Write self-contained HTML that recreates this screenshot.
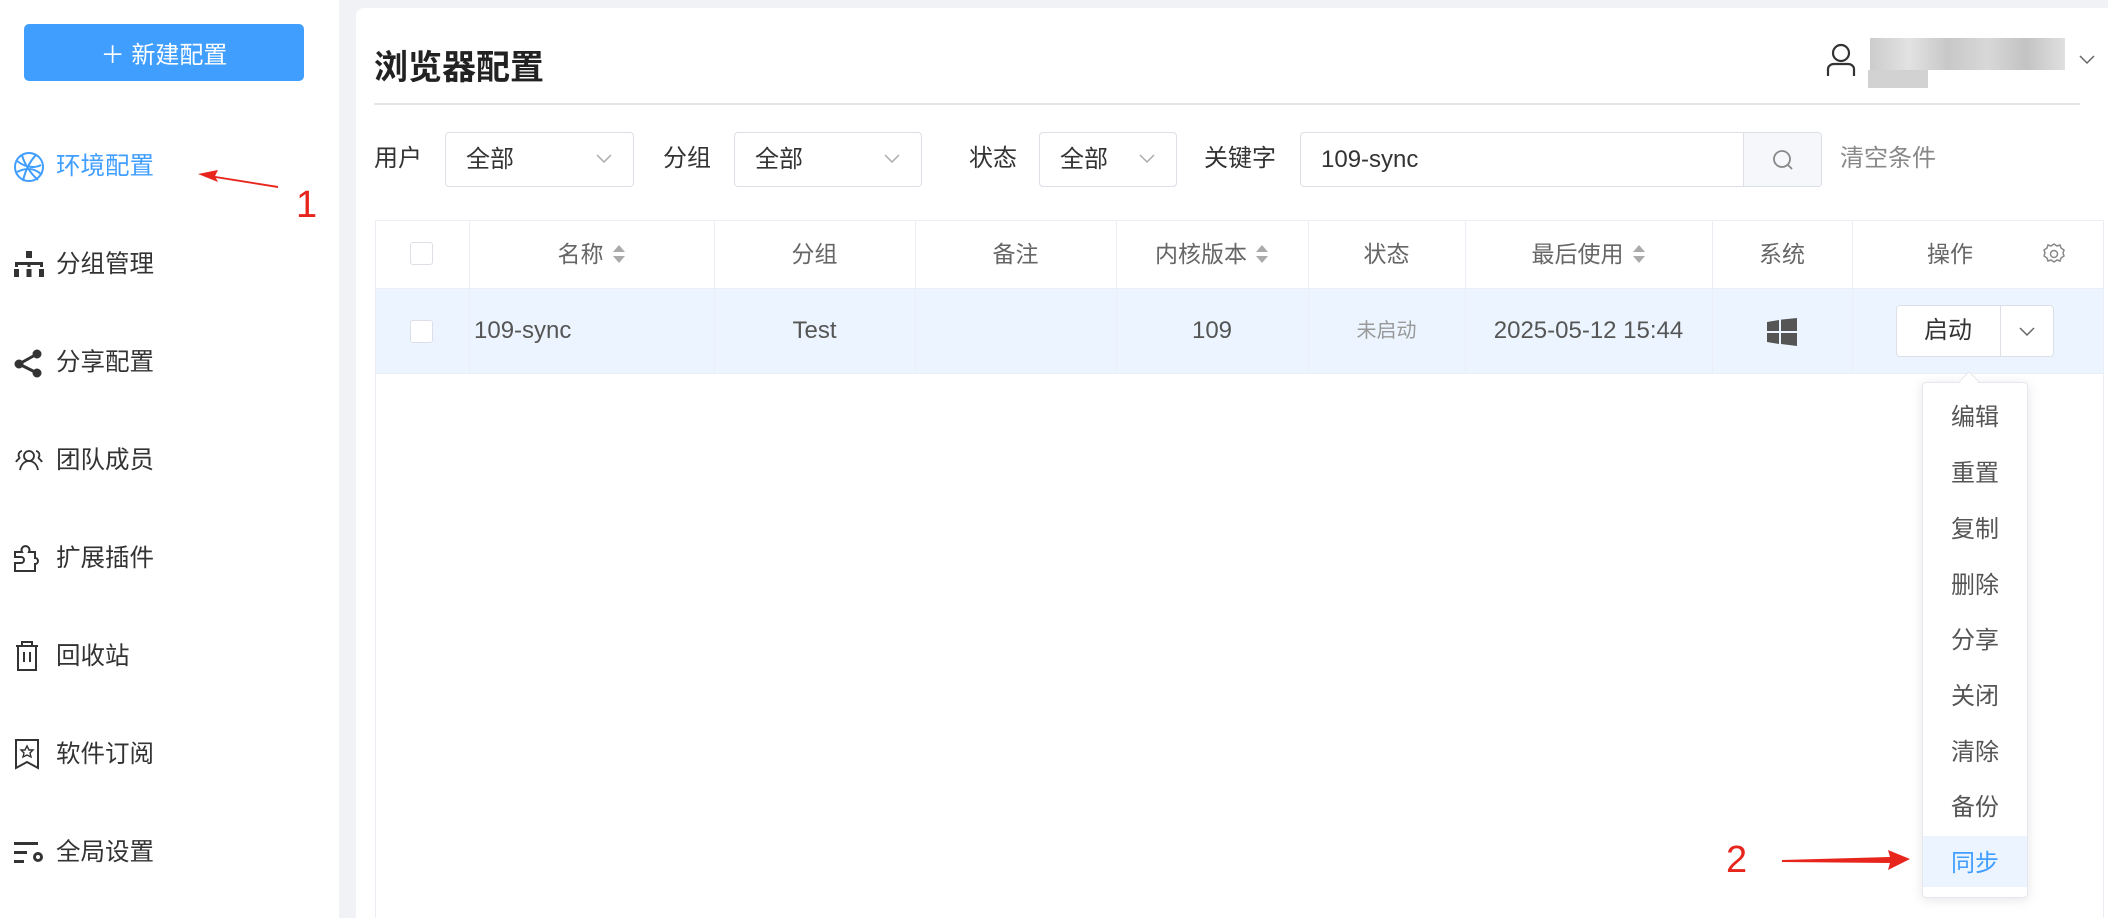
<!DOCTYPE html>
<html><head><meta charset="utf-8"><style>
*{margin:0;padding:0;box-sizing:border-box}
body{width:2108px;height:918px;overflow:hidden;background:#f0f2f5;font-family:"Liberation Sans","Noto Sans CJK SC",sans-serif;color:#333;position:relative}
.a{position:absolute}
.side{left:0;top:0;width:339px;height:918px;background:#fff}
.btn{left:24px;top:24px;width:280px;height:57px;background:#409eff;border-radius:5px;color:#fff;font-size:24px;display:flex;align-items:center;justify-content:center}
.mi{left:56px;font-size:24.5px;color:#333;line-height:30px}
.ic{left:13px}
.main{left:356px;top:8px;width:1752px;height:910px;background:#fff;border-radius:8px 0 0 0}
.lbl{font-size:24px;color:#333;top:144px;line-height:30px}
.sel{top:132px;height:55px;border:1px solid #dcdfe6;border-radius:4px;font-size:24px;color:#333;padding-left:20px;line-height:53px}
.sel svg{position:absolute;right:20px;top:20px}
.th{top:220px;height:68px;line-height:68px;font-size:23px;color:#666;text-align:center}
.td{top:288px;height:86px;line-height:86px;font-size:24px;color:#555;text-align:center}
.vl{top:220px;width:1px;height:154px;background:#ebeef5}
.cb{width:23px;height:23px;border:1px solid #dcdfe6;border-radius:3px;background:#fff}
.dd{font-size:24px;color:#555;width:106px;text-align:center;left:1922px;line-height:30px}
.sort{display:inline-block;vertical-align:middle;margin-left:8px;width:14px;height:20px;position:relative;top:-2px}
</style></head><body>
<div class="a side"></div>
<div class="a btn">＋&nbsp;新建配置</div>

<svg class="a ic" style="top:150px" width="32" height="34" viewBox="0 0 32 34" fill="none" stroke="#409eff" stroke-width="2"><circle cx="16" cy="17" r="14"/><path d="M4 11c8 6 16 8 24 4M4 22c8-4 16-5 24 2M9 5c2 8 8 18 16 25M23 5c-6 6-11 16-13 26"/></svg>
<div class="a mi" style="top:152px;color:#409eff">环境配置</div>
<svg class="a ic" style="top:250px" width="32" height="30" viewBox="0 0 32 30" fill="#333"><rect x="13" y="1" width="6" height="7"/><rect x="2" y="12" width="28" height="3"/><rect x="2" y="12" width="3" height="5"/><rect x="14.5" y="12" width="3" height="5"/><rect x="27" y="12" width="3" height="5"/><rect x="1" y="19" width="5" height="8"/><rect x="13.5" y="19" width="5" height="8"/><rect x="26" y="19" width="5" height="8"/></svg>
<div class="a mi" style="top:250px">分组管理</div>
<svg class="a ic" style="top:347px" width="32" height="32" viewBox="0 0 32 32" fill="#333" stroke="#333" stroke-width="3"><line x1="6" y1="17" x2="24" y2="7"/><line x1="6" y1="17" x2="24" y2="26"/><circle cx="6" cy="17" r="3"/><circle cx="24" cy="7" r="3"/><circle cx="24" cy="26" r="3"/></svg>
<div class="a mi" style="top:348px">分享配置</div>
<svg class="a ic" style="top:448px" width="32" height="24" viewBox="0 0 32 24" fill="none" stroke="#333" stroke-width="1.8"><circle cx="16" cy="8" r="5"/><path d="M7 22c1-6 5-9 9-9s8 3 9 9M9 3a4 4 0 0 0-2 7M3 14c1-2 2-3 4-4M23 3a4 4 0 0 1 2 7M29 14c-1-2-2-3-4-4"/></svg>
<div class="a mi" style="top:446px">团队成员</div>
<svg class="a ic" style="top:543px" width="30" height="30" viewBox="0 0 30 30" fill="none" stroke="#333" stroke-width="2"><path d="M2 14h6a3 3 0 1 1 0 6H2v8h20v-7a3 3 0 1 0 0-6V9h-6a4 4 0 1 0-7 0H2z"/></svg>
<div class="a mi" style="top:544px">扩展插件</div>
<svg class="a ic" style="top:640px" width="28" height="32" viewBox="0 0 28 32" fill="none" stroke="#333" stroke-width="2"><path d="M3 6h22M9 6V2h10v4M5 6v24h18V6M11 12v10M17 12v10"/></svg>
<div class="a mi" style="top:642px">回收站</div>
<svg class="a ic" style="top:738px" width="28" height="32" viewBox="0 0 28 32" fill="none" stroke="#333" stroke-width="2"><path d="M3 2h22v28l-11-6-11 6z"/><path d="M14 8l2 4h4l-3 3 1 4-4-2-4 2 1-4-3-3h4z" stroke-width="1.4"/></svg>
<div class="a mi" style="top:740px">软件订阅</div>
<svg class="a ic" style="top:840px" width="32" height="26" viewBox="0 0 32 26" fill="#333"><rect x="1" y="2" width="24" height="3"/><rect x="1" y="11" width="13" height="3"/><rect x="1" y="20" width="10" height="3"/><circle cx="25" cy="17" r="5"/><circle cx="25" cy="17" r="2" fill="#fff"/></svg>
<div class="a mi" style="top:838px">全局设置</div>

<svg class="a" style="left:190px;top:160px" width="100" height="40"><path d="M88 26 L25 16 L28 10 L8 14 L28 22 L26 18 L88 28z" fill="#e8251c"/></svg>
<div class="a" style="left:296px;top:184px;font-size:38px;color:#e8251c">1</div>

<div class="a main"></div>
<div class="a" style="left:374px;top:40px;font-size:34px;font-weight:bold;color:#222">浏览器配置</div>
<svg class="a" style="left:1826px;top:42px" width="30" height="36" viewBox="0 0 30 36" fill="none" stroke="#333" stroke-width="2.2"><circle cx="15" cy="11" r="8"/><path d="M2 34v-7c0-3 3-5 6-5h14c3 0 6 2 6 5v7"/></svg>
<div class="a" style="left:1870px;top:38px;width:195px;height:32px;background:linear-gradient(90deg,#ccc,#e2e2e2 20%,#c8c8c8 40%,#d8d8d8 60%,#c3c3c3 80%,#e0e0e0)"></div>
<div class="a" style="left:1868px;top:70px;width:60px;height:18px;background:#d2d2d2"></div>
<svg class="a" style="left:2078px;top:54px" width="18" height="12"><path d="M2 2l7 7 7-7" fill="none" stroke="#666" stroke-width="1.5"/></svg>
<div class="a" style="left:374px;top:103px;width:1706px;height:2px;background:#e4e4e4"></div>

<div class="a lbl" style="left:374px">用户</div>
<div class="a sel" style="left:445px;width:189px">全部<svg width="18" height="12"><path d="M2 2l7 7 7-7" fill="none" stroke="#aaa" stroke-width="1.5"/></svg></div>
<div class="a lbl" style="left:663px">分组</div>
<div class="a sel" style="left:734px;width:188px">全部<svg width="18" height="12"><path d="M2 2l7 7 7-7" fill="none" stroke="#aaa" stroke-width="1.5"/></svg></div>
<div class="a lbl" style="left:969px">状态</div>
<div class="a sel" style="left:1039px;width:138px">全部<svg width="18" height="12"><path d="M2 2l7 7 7-7" fill="none" stroke="#aaa" stroke-width="1.5"/></svg></div>
<div class="a lbl" style="left:1204px">关键字</div>
<div class="a sel" style="left:1300px;width:522px">109-sync</div>
<div class="a" style="left:1743px;top:133px;width:78px;height:53px;background:#f5f7fa;border-left:1px solid #dcdfe6;border-radius:0 4px 4px 0"></div>
<svg class="a" style="left:1771px;top:148px" width="24" height="24" fill="none" stroke="#888" stroke-width="1.8"><circle cx="11" cy="11" r="8"/><path d="M17 17l4 4"/></svg>
<div class="a lbl" style="left:1840px;color:#888">清空条件</div>

<div class="a" style="left:375px;top:220px;width:1729px;height:698px;border:1px solid #ebeef5;border-bottom:none"></div>
<div class="a" style="left:376px;top:288px;width:1727px;height:86px;background:#ecf5ff;border-top:1px solid #ebeef5;border-bottom:1px solid #ebeef5"></div>
<div class="a vl" style="left:469px"></div><div class="a vl" style="left:714px"></div><div class="a vl" style="left:915px"></div><div class="a vl" style="left:1116px"></div><div class="a vl" style="left:1308px"></div><div class="a vl" style="left:1465px"></div><div class="a vl" style="left:1712px"></div><div class="a vl" style="left:1852px"></div>
<div class="a cb" style="left:410px;top:242px"></div>
<div class="a cb" style="left:410px;top:320px"></div>
<div class="a th" style="left:469px;width:245px">名称<svg class="sort" viewBox="0 0 14 20" fill="#aaa"><path d="M7 1l6 7H1zM7 19l6-7H1z"/></svg></div>
<div class="a th" style="left:714px;width:201px">分组</div>
<div class="a th" style="left:915px;width:201px">备注</div>
<div class="a th" style="left:1116px;width:192px">内核版本<svg class="sort" viewBox="0 0 14 20" fill="#aaa"><path d="M7 1l6 7H1zM7 19l6-7H1z"/></svg></div>
<div class="a th" style="left:1308px;width:157px">状态</div>
<div class="a th" style="left:1465px;width:247px">最后使用<svg class="sort" viewBox="0 0 14 20" fill="#aaa"><path d="M7 1l6 7H1zM7 19l6-7H1z"/></svg></div>
<div class="a th" style="left:1712px;width:140px">系统</div>
<div class="a th" style="left:1900px;width:100px">操作</div>
<svg class="a" style="left:2043px;top:242px" width="22" height="24" viewBox="0 0 22 24" fill="none" stroke="#888" stroke-width="1.5"><path d="M11 2l3 2 3-1 1 3 3 2-1 3 1 3-3 2-1 3-3-1-3 2-3-2-3 1-1-3-3-2 1-3-1-3 3-2 1-3 3 1z"/><circle cx="11" cy="12" r="3.5"/></svg>

<div class="a td" style="left:474px;width:200px;text-align:left">109-sync</div>
<div class="a td" style="left:714px;width:201px">Test</div>
<div class="a td" style="left:1116px;width:192px">109</div>
<div class="a td" style="left:1308px;width:157px;font-size:20px;color:#999">未启动</div>
<div class="a td" style="left:1465px;width:247px">2025-05-12 15:44</div>
<svg class="a" style="left:1767px;top:318px" width="30" height="28" viewBox="0 0 30 28" fill="#555"><path d="M0 4l12-2v11H0zM14 1.6L30 0v13H14zM0 15h12v11L0 24zM14 15h16v13l-16-2z"/></svg>
<div class="a" style="left:1896px;top:305px;width:158px;height:52px;background:#fff;border:1px solid #dcdfe6;border-radius:4px"></div>
<div class="a" style="left:2000px;top:306px;width:1px;height:50px;background:#dcdfe6"></div>
<div class="a" style="left:1896px;top:316px;width:104px;text-align:center;font-size:24px;line-height:30px;color:#333">启动</div>
<svg class="a" style="left:2018px;top:326px" width="18" height="12"><path d="M2 2l7 7 7-7" fill="none" stroke="#666" stroke-width="1.5"/></svg>

<div class="a" style="left:1922px;top:382px;width:106px;height:516px;background:#fff;border:1px solid #e4e7ed;border-radius:4px;box-shadow:0 2px 12px rgba(0,0,0,.1)"></div>
<div class="a" style="left:1962px;top:374px;width:14px;height:14px;background:#fff;transform:rotate(45deg);border-left:1px solid #e4e7ed;border-top:1px solid #e4e7ed"></div>
<div class="a" style="left:1923px;top:836px;width:104px;height:51px;background:#ecf5ff"></div>
<div class="a dd" style="top:403px">编辑</div>
<div class="a dd" style="top:459px">重置</div>
<div class="a dd" style="top:515px">复制</div>
<div class="a dd" style="top:571px">删除</div>
<div class="a dd" style="top:626px">分享</div>
<div class="a dd" style="top:682px">关闭</div>
<div class="a dd" style="top:738px">清除</div>
<div class="a dd" style="top:793px">备份</div>
<div class="a dd" style="top:849px;color:#409eff">同步</div>

<svg class="a" style="left:1770px;top:845px" width="150" height="30"><path d="M12 15 L120 12 L118 5 L140 14 L118 25 L120 18 L12 17z" fill="#e8251c"/></svg>
<div class="a" style="left:1726px;top:839px;font-size:38px;color:#e8251c">2</div>
</body></html>
